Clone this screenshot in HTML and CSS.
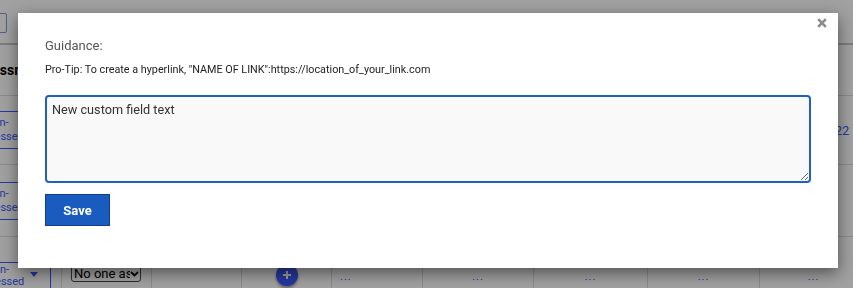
FILE: index.html
```html
<!DOCTYPE html>
<html>
<head>
<meta charset="UTF-8">
<title>Custom field</title>
<link rel="stylesheet" href="styles.css">
</head>
<body>
<div class="page">
    <div class="toolbar">
        <span class="tb-btn"></span>
    </div>
    <div class="grid">
        <div class="row head">
            <div class="cell c0"><b>Assessment</b></div>
            <div class="cell c1"></div>
            <div class="cell c2"></div>
            <div class="cell c3"></div>
            <div class="cell c4"></div>
            <div class="cell c5"></div>
            <div class="cell c6"></div>
            <div class="cell c7"></div>
            <div class="cell c8"></div>
        </div>
        <div class="row r1">
            <div class="cell c0"><div class="status">Un-<br>assessed</div></div>
            <div class="cell c1"></div>
            <div class="cell c2"></div>
            <div class="cell c3"></div>
            <div class="cell c4"></div>
            <div class="cell c5"></div>
            <div class="cell c6"></div>
            <div class="cell c7"></div>
            <div class="cell c8"><a class="link" href="javascript:;">2021-12-22</a></div>
        </div>
        <div class="row r2">
            <div class="cell c0"><div class="status">Un-<br>assessed</div></div>
            <div class="cell c1"></div>
            <div class="cell c2"></div>
            <div class="cell c3"></div>
            <div class="cell c4"></div>
            <div class="cell c5"></div>
            <div class="cell c6"></div>
            <div class="cell c7"></div>
            <div class="cell c8"></div>
        </div>
        <div class="row r3">
            <div class="cell c0">
                <div class="status pick">
                    <span class="pick-text">Un-<br>assessed</span>
                    <svg class="caret" width="8" height="5" viewBox="0 0 8 5"><path d="M0 0h8L4 5z" fill="#3d5afe"/></svg>
                </div>
            </div>
            <div class="cell c1">
                <div class="fake-select">
                    <span class="fs-text">No one assigned</span>
                    <svg width="9" height="6" viewBox="0 0 9 6"><path d="M1 1l3.5 3.5L8 1" fill="none" stroke="#000" stroke-width="1.8"/></svg>
                </div>
            </div>
            <div class="cell c2"></div>
            <div class="cell c3"><span class="add-btn"><svg width="10" height="10" viewBox="0 0 10 10"><path d="M5 1v8M1 5h8" stroke="#fff" stroke-width="2"/></svg></span></div>
            <div class="cell c4 left"><span class="dots">...</span></div>
            <div class="cell c5"><span class="dots">...</span></div>
            <div class="cell c6"><span class="dots">...</span></div>
            <div class="cell c7"><span class="dots">...</span></div>
            <div class="cell c8"><span class="dots">...</span></div>
        </div>
    </div>
</div>

<div class="backdrop"></div>

<div class="modal">
    <a class="close" href="javascript:;">
        <svg width="10" height="10" viewBox="0 0 10 10"><path d="M1.2 1.2l7.6 7.6M8.8 1.2l-7.6 7.6" stroke="#8c8c8c" stroke-width="2.6"/></svg>
    </a>
    <div class="label">Guidance:</div>
    <div class="tip">Pro-Tip: To create a hyperlink, "NAME OF LINK":https://location_of_your_link.com</div>
    <textarea class="field" id="field">New custom field text</textarea>
    <button class="save">Save</button>
</div>

<script>
    //光标放到文字最后
    var field = document.getElementById('field');
    field.focus();
    field.setSelectionRange(field.value.length, field.value.length);
</script>
</body>
</html>
```

FILE: styles.css
```css
* {
	margin: 0;
	padding: 0;
}
body {
	background: #fff;
	font-family: Roboto, "Liberation Sans", sans-serif;
	overflow: hidden;
}
a {
	text-decoration: none;
}

/* 后面的表格 */
.page {
	margin-left: -60px;
	width: 1000px;
}
.toolbar {
	height: 43px;
	padding: 13px 0 0 27px;
	box-sizing: border-box;
}
.tb-btn {
	display: block;
	width: 38px;
	height: 18px;
	border: 1px solid #8496d8;
	border-radius: 2px;
}
.grid {
	border-top: 2px solid #c6c6c6;
}
.row {
	display: flex;
	border-bottom: 1px solid #dcdcdc;
}
.head {
	height: 50px;
}
.r1 {
	height: 68px;
}
.r2 {
	height: 71px;
}
.r3 {
	height: 72px;
}
.cell {
	border-right: 1px solid #dcdcdc;
	display: flex;
	align-items: center;
	justify-content: center;
	box-sizing: border-box;
}
.cell.left {
	justify-content: flex-start;
	padding-left: 8px;
}
.c0 { width: 122px; justify-content: flex-start; padding-left: 10px; }
.c1 { width: 90px; justify-content: flex-start; padding-left: 9px; }
.c2 { width: 90px; }
.c3 { width: 90px; }
.c4 { width: 91px; }
.c5 { width: 111px; }
.c6 { width: 114px; }
.c7 { width: 112px; }
.c8 { width: 108px; }

.head .c0 {
	justify-content: center;
	padding-left: 14px;
	font-size: 14px;
	color: #000;
}
.status {
	width: 101px;
	height: 38px;
	box-sizing: border-box;
	border: 1px solid #3d5afe;
	color: #3d5afe;
	font-size: 11px;
	line-height: 14px;
	text-align: center;
	display: flex;
	align-items: center;
	justify-content: center;
}
.r3 .c0 {
	align-items: flex-start;
}
.status.pick {
	margin-top: 25px;
	height: 34px;
	justify-content: flex-start;
	align-items: flex-start;
	padding-left: 25px;
	line-height: 12px;
}
.pick-text {
	width: 50px;
	padding-top: 1px;
}
.caret {
	margin: 9px 0 0 4px;
}
.link {
	color: #3d5afe;
	font-size: 13px;
	margin-left: 6px;
}
.fake-select {
	width: 70px;
	height: 17px;
	box-sizing: border-box;
	border: 1px solid #4a4a4a;
	border-radius: 3px;
	display: flex;
	align-items: center;
	padding: 0 2px 0 2px;
	font-size: 13px;
	color: #000;
	overflow: hidden;
	margin-top: 1px;
}
.fs-text {
	width: 56px;
	flex-shrink: 0;
	white-space: nowrap;
	overflow: hidden;
}
.fake-select svg {
	flex-shrink: 0;
}
.add-btn {
	width: 22px;
	height: 22px;
	border-radius: 50%;
	background: #3d5afe;
	box-shadow: 0 2px 3px rgba(0,0,0,.4);
	display: flex;
	align-items: center;
	justify-content: center;
	margin-top: 4px;
}
.dots {
	color: #3d5afe;
	font-size: 11px;
	letter-spacing: 1px;
	margin-top: 6px;
}

/* 遮罩 */
.backdrop {
	position: fixed;
	left: 0;
	top: 0;
	right: 0;
	bottom: 0;
	background: rgba(0,0,0,.37);
}

/* 弹窗 */
.modal {
	position: fixed;
	left: 18px;
	top: 13px;
	width: 820px;
	height: 255px;
	box-sizing: border-box;
	padding: 25px 27px;
	background: #fff;
	box-shadow: 0 5px 15px rgba(0,0,0,.5);
}
.close {
	position: absolute;
	right: 11px;
	top: 5px;
	width: 10px;
	height: 10px;
}
.close svg {
	display: block;
}
.label {
	font-size: 13px;
	line-height: 16px;
	color: #555;
	margin-bottom: 9px;
}
.tip {
	font-size: 10.8px;
	line-height: 14px;
	color: #222;
	margin-bottom: 18px;
}
.field {
	display: block;
	width: 100%;
	height: 88px;
	box-sizing: border-box;
	border: 2px solid #1f5fcc;
	border-radius: 4px;
	background: #f9f9f9;
	padding: 5px;
	font-family: Roboto, "Liberation Sans", sans-serif;
	font-size: 12.7px;
	line-height: 15px;
	color: #333;
	outline: none;
	resize: vertical;
}
.save {
	display: block;
	margin-top: 11px;
	width: 65px;
	height: 32px;
	background: #1a5bbf;
	border: 1px solid #0f3f8c;
	color: #fff;
	font-family: Roboto, "Liberation Sans", sans-serif;
	font-size: 13px;
	font-weight: bold;
	cursor: pointer;
}
```
